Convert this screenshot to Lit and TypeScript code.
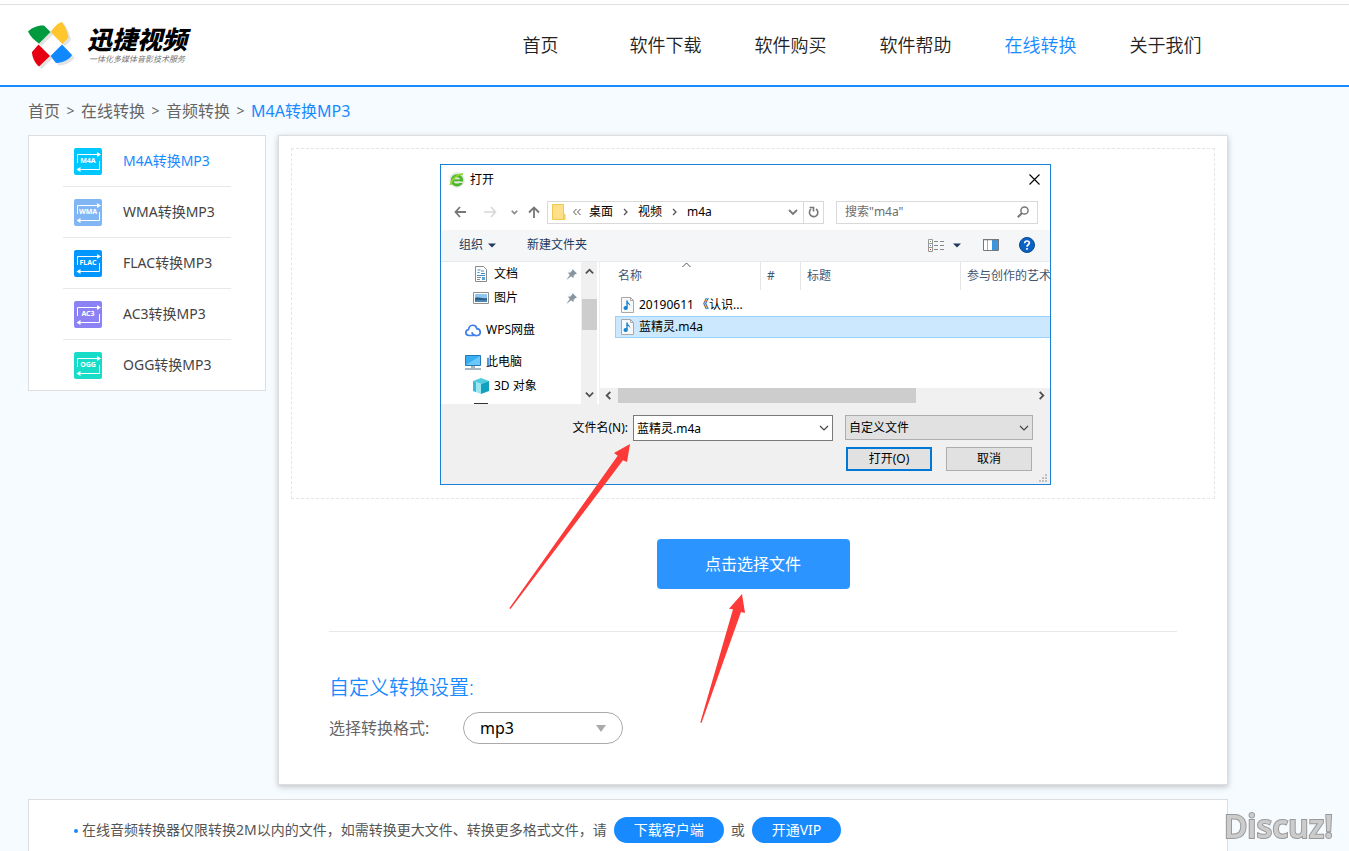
import { LitElement, html, svg, css } from "lit";
import { customElement, property, state } from "lit/decorators.js";
import { classMap } from "lit/directives/class-map.js";
import { styleMap } from "lit/directives/style-map.js";

const NAV = ["首页", "软件下载", "软件购买", "软件帮助", "在线转换", "关于我们"];

const FORMATS = [
  { tag: "M4A", color: "#00c8ff" },
  { tag: "WMA", color: "#80b6f4" },
  { tag: "FLAC", color: "#0096ff" },
  { tag: "AC3", color: "#8c82f3" },
  { tag: "OGG", color: "#17dcc8" },
];

const fontStack = css`"Noto Sans", "Noto Sans CJK SC", sans-serif`;

const chevron = (size = 10) => html`<svg width=${size} height=${size} viewBox="0 0 10 10" aria-hidden="true">
  <path d="M1 3l4 4 4-4" fill="none" stroke="currentColor" stroke-width="1.2" />
</svg>`;

const noteIcon = html`<svg class="note" width="13" height="16" viewBox="0 0 13 16" aria-hidden="true">
  <path d="M.5.5h9l3 3v12H.5z" fill="#f8f8f8" stroke="#a8a8a8" />
  <path d="M9.500.500v3h3" fill="none" stroke="#a8a8a8" />
  <path d="M6 3.500v7" stroke="#1583cf" stroke-width="1.400" />
  <path d="M6 3.500c.3 2 3.500 2.500 3.200 6-.5-2-1.800-2.600-3.200-2.800z" fill="#1583cf" />
  <ellipse cx="4.700" cy="11" rx="2.200" ry="1.900" fill="#1583cf" />
</svg>`;

const pinIcon = html`<svg width="11" height="11" viewBox="0 0 11 11" aria-hidden="true">
  <path d="M6.500 0L11 4.500l-1.500.4L7.600 6.800 7.500 9.200 5.300 7.200.3 10.900l3.500-5L1.800 3.700l2.500-.1 1.900-2z" fill="#8796a3" />
</svg>`;

/** A file picker window: address bar, folder tree, file list and name field. */
@customElement("file-dialog")
export class FileDialog extends LitElement {
  static styles = css`
    :host {
      display: block;
      box-sizing: border-box;
      border: 1px solid #1a80d6;
      background: #fff;
      color: #000;
      font: 12px/16px ${fontStack};
    }
    * { box-sizing: border-box; }
    button, input, select { font: inherit; color: inherit; margin: 0; padding: 0; border: 0; background: none; border-radius: 0; outline: 0; }
    svg { display: block; flex: none; }
    .title { display: flex; align-items: center; gap: 5px; height: 29px; padding: 0 10px 0 8px; }
    .close { margin-left: auto; }
    .path { display: flex; align-items: center; height: 36px; padding: 0 12px 0 13px; color: #666; }
    .arrows { display: flex; align-items: center; gap: 14px; width: 93px; }
    .arrows button:nth-child(1) { margin-right: 3px; }
    .arrows button:nth-child(4) { margin-left: -4px; }
    .address { display: flex; align-items: center; flex: 1; height: 23px; border: 1px solid #d9d9d9; padding-left: 4px; }
    .crumbs { display: flex; align-items: center; gap: 8px; flex: 1; color: #000; margin-left: 7px; }
    .crumbs svg { color: #555; }
    .drop { display: flex; justify-content: center; width: 20px; }
    .reload { display: flex; align-items: center; justify-content: center; align-self: stretch; width: 20px; border-left: 1px solid #d9d9d9; }
    .search { display: flex; align-items: center; width: 202px; height: 23px; margin-left: 12px; padding: 0 8px; border: 1px solid #d9d9d9; }
    .search input { flex: 1; min-width: 0; }
    .search input::placeholder { color: #6d6d6d; opacity: 1; }
    .tools { display: flex; align-items: center; height: 32px; padding: 0 15px 1px 18px; background: #f5f6f7; border-bottom: 1px solid #e8eaec; color: #1e395b; }
    .tools button { display: flex; align-items: center; gap: 5px; }
    .tools .new { margin: 0 auto 0 31px; }
    .tools .view { gap: 8px; margin-right: 22px; }
    .tools .pane { margin-right: 20px; }
    .body { display: flex; height: 142px; }
    .tree { width: 140px; overflow: hidden; }
    .tree ul { list-style: none; margin: 0 0 8px; padding: 0; }
    .tree li { display: flex; align-items: center; gap: 5px; height: 24px; padding: 0 4px 0 24px; }
    .tree li.sub { padding-left: 32px; }
    .tree li svg:last-child:not(:first-child) { margin-left: auto; }
    .vbar { display: flex; flex-direction: column; align-items: center; width: 16px; margin-right: 2px; padding: 5px 0; background: #f0f0f0; color: #505050; }
    .vbar i { width: 15px; height: 31px; margin: 23px 0 auto; background: #cdcdcd; }
    .files { display: flex; flex-direction: column; flex: 1; min-width: 0; border-left: 1px solid #f0f0f0; }
    .scroll { position: relative; flex: 1; overflow: hidden; padding-left: 15px; }
    .sort { position: absolute; left: 82px; top: -3px; color: #555; }
    table { border-collapse: collapse; table-layout: fixed; width: 100%; }
    .c1 { width: 146px; } .c2 { width: 40px; } .c3 { width: 160px; }
    th { padding: 0 0 4px; font-weight: 400; text-align: left; color: #43566f; white-space: nowrap; }
    th span { display: block; height: 28px; padding-left: 6px; line-height: 28px; border-right: 1px solid #e5e5e5; }
    th:first-child span { padding-left: 3px; }
    th:last-child span { border-right: 0; }
    td { height: 22px; padding: 0; white-space: nowrap; }
    td .name { display: flex; align-items: center; gap: 5px; height: 22px; padding-left: 6px; overflow: hidden; }
    .picked { background: #cce8ff; }
    .picked td { box-shadow: inset 0 1px #99d1ff, inset 0 -1px #99d1ff; }
    .picked td:first-child { box-shadow: inset 0 1px #99d1ff, inset 0 -1px #99d1ff, inset 1px 0 #99d1ff; }
    .hbar { display: flex; align-items: center; height: 16px; padding: 0 4px 1px; background: #f0f0f0; color: #505050; }
    .hbar i { width: 298px; height: 15px; margin: 0 auto 0 5px; background: #cdcdcd; }
    .foot { display: grid; grid-template-columns: 1fr 200px 188px; gap: 6px 12px; padding: 11px 17px 13px; background: #f0f0f0; position: relative; align-items: start; }
    .foot label { text-align: right; line-height: 26px; margin-right: -7px; }
    .field, .kind { display: flex; align-items: center; position: relative; }
    .field input { width: 100%; height: 26px; padding: 0 22px 0 3px; border: 1px solid #7a7a7a; background: #fff; }
    .kind select { width: 100%; height: 25px; padding: 0 3px; appearance: none; border: 1px solid #adadad; background: #e1e1e1; }
    .field svg, .kind svg { position: absolute; right: 4px; color: #444; pointer-events: none; }
    .actions { grid-column: 3; display: flex; justify-content: space-between; padding: 0 1px; }
    .actions button { width: 86px; height: 24px; border: 1px solid #adadad; background: #e1e1e1; }
    .actions .ok { border: 2px solid #0078d7; }
    .grip { position: absolute; right: 3px; bottom: 2px; }
  `;

  render() {
    return html`
      <div class="title">
        <svg width="16" height="16" viewBox="0 0 16 16" aria-hidden="true">
          <circle cx="8" cy="8" r="7.700" fill="#e4e8e2" />
          <circle cx="8" cy="8.400" r="4.700" fill="none" stroke="#4fb52a" stroke-width="3" />
          <path d="M4 8.300h8" stroke="#4fb52a" stroke-width="2" />
          <path d="M9.500 9.500h6v1.500h-6z" fill="#e4e8e2" />
          <path d="M1.500 13C2 7.500 8.500 1.500 14 2.200" stroke="#8bd830" stroke-width="1.700" fill="none" />
        </svg>
        <span>打开</span>
        <button class="close" aria-label="关闭">
          <svg width="11" height="11" viewBox="0 0 11 11"><path d="M.5.5l10 10M10.500.5l-10 10" stroke="#000" stroke-width="1.100" /></svg>
        </button>
      </div>
      <div class="path">
        <div class="arrows">
          <button aria-label="后退"><svg width="13" height="12" viewBox="0 0 13 12"><path d="M6 1L1.500 6 6 11M1.500 6H12" fill="none" stroke="#777" stroke-width="1.800" /></svg></button>
          <button aria-label="前进"><svg width="13" height="12" viewBox="0 0 13 12"><path d="M7 1l4.500 5L7 11M11.500 6H0" fill="none" stroke="#d8d8d8" stroke-width="1.600" /></svg></button>
          <button aria-label="最近位置"><svg width="7" height="5" viewBox="0 0 7 5"><path d="M.7.7l2.800 2.800L6.300.7" fill="none" stroke="#888" stroke-width="1.600" /></svg></button>
          <button aria-label="上移"><svg width="12" height="12" viewBox="0 0 12 12"><path d="M1 6.500L6 1.500l5 5M6 1.500V12" fill="none" stroke="#777" stroke-width="1.800" /></svg></button>
        </div>
        <div class="address">
          <svg width="14" height="16" viewBox="0 0 14 16" aria-hidden="true"><path d="M.5.500h11v10H13v5H.5z" fill="#ffe08a" stroke="#f0c751" /><path d="M11.500 10.500v5" stroke="#f0c751" /></svg>
          <div class="crumbs">
            <svg width="8" height="8" viewBox="0 0 8 8"><path d="M3.500 1l-3 3 3 3M7.500 1l-3 3 3 3" fill="none" stroke="currentColor" /></svg>
            <button>桌面</button>${this.step()}<button>视频</button>${this.step()}<button>m4a</button>
          </div>
          <button class="drop" aria-label="历史"><svg width="10" height="7" viewBox="0 0 10 7"><path d="M1 1l4 4 4-4" fill="none" stroke="#777" stroke-width="1.800" /></svg></button>
          <button class="reload" aria-label="刷新">
            <svg width="11" height="12" viewBox="0 0 11 12"><path d="M3 3.200A4.200 4.200 0 1 0 8 3M1.500 1.500h4v4" fill="none" stroke="#777" stroke-width="1.600" /></svg>
          </button>
        </div>
        <div class="search">
          <input type="text" aria-label="搜索" placeholder='搜索"m4a"' />
          <svg width="12" height="12" viewBox="0 0 12 12" aria-hidden="true"><circle cx="7.500" cy="4.500" r="3.600" fill="none" stroke="#777" stroke-width="1.500" /><path d="M5 7L.8 11.200" stroke="#777" stroke-width="2" /></svg>
        </div>
      </div>
      <div class="tools">
        <button>组织 <svg width="8" height="5" viewBox="0 0 8 5"><path d="M0 .5h8l-4 4z" fill="#1e395b" /></svg></button>
        <button class="new">新建文件夹</button>
        <button class="view" aria-label="视图">
          <svg width="17" height="13" viewBox="0 0 17 13">
            <path d="M.5.500h4v12h-4zM.5 4.500h4M.5 8.500h4" fill="#fff" stroke="#999" />
            <path d="M6 2.500h4M12 2.500h4M6 6.500h4M12 6.500h4M6 10.500h4M12 10.500h4" stroke="#888" />
            <path d="M2 2h1v1H2z" fill="#5b9b5b" /><path d="M2 6h1v1H2z" fill="#2b7fd6" /><path d="M2 10h1v1H2z" fill="#e02020" />
          </svg>
          <svg width="8" height="5" viewBox="0 0 8 5"><path d="M0 .5h8l-4 4z" fill="#1e395b" /></svg>
        </button>
        <button class="pane" aria-label="预览窗格">
          <svg width="16" height="12" viewBox="0 0 16 12"><path d="M.5.5h15v11H.5z" fill="#fff" stroke="#777" /><path d="M4.500 1v10" stroke="#aaa" /><path d="M9 1h6v10H9z" fill="#3c95dd" /><path d="M0 .500h16" stroke="#777" stroke-width="1.500" /></svg>
        </button>
        <button aria-label="帮助">
          <svg width="16" height="16" viewBox="0 0 16 16"><circle cx="8" cy="8" r="7.500" fill="#0b62c4" stroke="#07478f" /><path d="M5.700 6.200c0-3 4.600-2.800 4.600-.2C10.300 7.700 8 7.800 8 9.700M8 11v1.700" fill="none" stroke="#fff" stroke-width="1.700" /></svg>
        </button>
      </div>
      <div class="body">
        <div class="tree">
          <ul>
            <li class="sub">
              <svg width="16" height="16" viewBox="0 0 16 16"><path d="M2.500.5h8l3 3v12h-11z" fill="#fff" stroke="#8a8a8a" /><path d="M4.500 4h3M4.500 6.500h2M4 9.500h8M8 7.500h4M8 5h3" stroke="#3a8dc8" /><path d="M4 11.500h4M4 13.500h3" stroke="#888" /><path d="M9 11h3v3H9z" fill="#5ba4d8" /></svg>
              文档${pinIcon}
            </li>
            <li class="sub">
              <svg width="16" height="12" viewBox="0 0 16 12"><path d="M.5.5h15v11H.5z" fill="#fff" stroke="#8f8f8f" /><path d="M2 2h12v8H2z" fill="#8ec8f2" /><path d="M2 6c3-2 6 1 12 0v4H2z" fill="#2d5f86" /><path d="M2 8.500c5-1 8 0 12-.5v2H2z" fill="#4b86b5" /></svg>
              图片${pinIcon}
            </li>
          </ul>
          <ul>
            <li>
              <svg width="16" height="13" viewBox="0 0 16 13"><path d="M9 11.500H4C-.5 11 .3 6 3.500 5.600 4.200 0 11 0 11.800 4.600c4.500.4 4.500 6.500.6 6.900C9.500 12 7.200 10 6.800 8.200" fill="none" stroke="#3f7fe8" stroke-width="1.700" /></svg>
              WPS网盘
            </li>
          </ul>
          <ul>
            <li>
              <svg width="16" height="15" viewBox="0 0 16 15"><path d="M.5.5h15v10H.5z" fill="#38aef2" stroke="#2579b5" /><path d="M1 10L15 1v9z" fill="#6cc8fb" /><path d="M6 12h4M0 14h16" stroke="#8ba0ae" stroke-width="1.500" /></svg>
              此电脑
            </li>
            <li class="sub">
              <svg width="16" height="16" viewBox="0 0 16 16"><path d="M0 3l8-3 8 3-8 3z" fill="#4fcbe0" /><path d="M0 3l8 3v10l-8-3z" fill="#9be6f1" /><path d="M16 3L8 6v10l8-3z" fill="#12a0bf" /><path d="M0 3l3 1v10l-3-1z" fill="#35bcd6" /></svg>
              3D 对象
            </li>
            <li class="sub">
              <svg width="16" height="14" viewBox="0 0 16 14"><path d="M1 0h14v14H1z" fill="#333" /></svg>
            </li>
          </ul>
        </div>
        <div class="vbar">
          <svg width="9" height="9" viewBox="0 0 10 10"><path d="M1 7l4-4 4 4" fill="none" stroke="currentColor" stroke-width="2" /></svg>
          <i></i>
          <svg width="9" height="9" viewBox="0 0 10 10"><path d="M1 3l4 4 4-4" fill="none" stroke="currentColor" stroke-width="2" /></svg>
        </div>
        <div class="files">
          <div class="scroll">
            <svg class="sort" width="9" height="9" viewBox="0 0 9 9"><path d="M.5 8L4.500 4l4 4" fill="none" stroke="currentColor" /></svg>
            <table>
              <colgroup><col class="c1" /><col class="c2" /><col class="c3" /><col /></colgroup>
              <thead><tr><th><span>名称</span></th><th><span>#</span></th><th><span>标题</span></th><th><span>参与创作的艺术</span></th></tr></thead>
              <tbody>
                <tr><td><div class="name">${noteIcon}20190611 《认识...</div></td><td></td><td></td><td></td></tr>
                <tr class="picked"><td><div class="name">${noteIcon}蓝精灵.m4a</div></td><td></td><td></td><td></td></tr>
              </tbody>
            </table>
          </div>
          <div class="hbar">
            <svg width="9" height="9" viewBox="0 0 10 10"><path d="M7 1L3 5l4 4" fill="none" stroke="currentColor" stroke-width="2" /></svg>
            <i></i>
            <svg width="9" height="9" viewBox="0 0 10 10"><path d="M3 1l4 4-4 4" fill="none" stroke="currentColor" stroke-width="2" /></svg>
          </div>
        </div>
      </div>
      <div class="foot">
        <label for="fname">文件名(N):</label>
        <div class="field"><input id="fname" type="text" value="蓝精灵.m4a" />${chevron()}</div>
        <div class="kind"><select aria-label="文件类型"><option>自定义文件</option></select>${chevron()}</div>
        <div class="actions"><button class="ok">打开(O)</button><button>取消</button></div>
        <svg class="grip" width="8" height="8" viewBox="0 0 8 8" aria-hidden="true"><path d="M6 0h2v2H6zM3 3h2v2H3zM6 3h2v2H6zM0 6h2v2H0zM3 6h2v2H3zM6 6h2v2H6z" fill="#bfbfbf" /></svg>
      </div>
    `;
  }

  private step() {
    return html`<svg width="9" height="8" viewBox="0 0 9 8" aria-hidden="true"><path d="M3 1l3 3-3 3" fill="none" stroke="currentColor" stroke-width="1.300" /></svg>`;
  }
}

/** Side list of the conversions on offer. */
@customElement("format-menu")
export class FormatMenu extends LitElement {
  @property() active = "M4A";

  static styles = css`
    :host { display: block; box-sizing: border-box; border: 1px solid #ddd; background: #fff; font: 14px/20px ${fontStack}; }
    ul { list-style: none; margin: 0 34px; padding: 0; }
    li + li { border-top: 1px solid #e8e8e8; }
    a { display: flex; align-items: center; gap: 21px; height: 50px; padding-left: 11px; color: #444; text-decoration: none; white-space: nowrap; }
    a.on { color: #188aff; }
    .tile { display: grid; width: 28px; height: 27px; border-radius: 2px; color: #fff; }
    .tile > * { grid-area: 1 / 1; place-self: center; }
    .tile span { font-size: 7px; line-height: 8px; font-weight: 700; }
  `;

  render() {
    return html`<ul>
      ${FORMATS.map(
        (f) => html`<li>
          <a href="#" class=${classMap({ on: f.tag === this.active })}>
            <span class="tile" style=${styleMap({ background: f.color })} aria-hidden="true">
              <svg width="28" height="27" viewBox="0 0 28 27">
                <path d="M3.500 15V6.500H23M25.500 13v8.500H6" fill="none" stroke="#fff" />
                <path d="M23 4l4 2.500L23 9zM6.500 19l-4 2.500 4 2.500z" fill="#fff" />
              </svg>
              <span>${f.tag}</span>
            </span>
            <span>${f.tag}转换MP3</span>
          </a>
        </li>`
      )}
    </ul>`;
  }
}

@customElement("app-root")
export class AppRoot extends LitElement {
  @state() private page = "在线转换";

  static styles = css`
    :host { display: flex; flex-direction: column; min-height: 100vh; background: #f6fbff; color: #666; font: 16px/24px ${fontStack}; }
    * { box-sizing: border-box; }
    a { color: inherit; text-decoration: none; }
    .wrap { width: 100%; max-width: 1256px; padding: 0 28px; }
    header { padding-top: 4px; background: #fff; border-bottom: 2px solid #188aff; }
    .bar { border-top: 1px solid #e0e0e0; }
    .bar .wrap { display: flex; align-items: center; justify-content: space-between; height: 80px; }
    .logo { display: flex; align-items: center; gap: 11px; }
    .logo svg { display: block; }
    .brand { display: flex; flex-direction: column; gap: 2px; margin-top: -2px; }
    .brand b { color: #000; font-size: 25px; line-height: 28px; font-weight: 900; font-style: italic; }
    .brand small { padding-left: 2px; font-size: 8px; line-height: 8px; font-weight: 400; font-style: italic; color: #777; }
    nav { display: grid; grid-template-columns: repeat(6, 125px); text-align: center; font-size: 18px; font-weight: 350; color: #222; }
    .on { color: #188aff; }
    .crumbs { display: flex; gap: 6px; padding-top: 12px; padding-bottom: 12px; }
    .crumbs i { font-style: normal; font-size: 14px; width: 9px; text-align: center; }
    .cols { display: flex; align-items: flex-start; gap: 12px; }
    format-menu { width: 238px; flex: none; }
    .panel { position: relative; flex: 1; min-width: 0; padding: 12px 12px 40px; background: #fff; border: 1px solid #ddd; box-shadow: 0 2px 6px rgba(0, 0, 0, 0.22); }
    .zone { padding: 15px 0 13px 148px; border: 1px dashed #e5e5e5; }
    file-dialog { width: 611px; max-width: 100%; }
    .choose { display: block; width: 193px; height: 50px; margin: 40px auto 42px; border: 0; border-radius: 4px; background: #2b94ff; color: #fff; font: inherit; }
    .settings { margin: 0 38px; padding-top: 41px; border-top: 1px solid #e8e8e8; }
    h2 { margin: 0 0 9px; font-size: 20px; line-height: 30px; font-weight: 350; color: #188aff; }
    .row { display: flex; align-items: center; }
    .row label { width: 134px; }
    .pick { position: relative; display: flex; align-items: center; width: 160px; }
    .pick select { width: 100%; height: 32px; padding: 0 16px; appearance: none; border: 1px solid #aaa; border-radius: 16px; background: #fff; font: inherit; color: #000; }
    .pick svg { position: absolute; right: 17px; pointer-events: none; }
    .marks { position: absolute; left: -1px; top: -1px; pointer-events: none; }
    footer { display: flex; flex: 1; margin-top: 14px; }
    .tips { flex: 1; margin: 0; padding: 17px 44px 0; list-style: none; background: #fff; border: 1px solid #ddd; border-bottom: 0; font-size: 14px; color: #555; }
    .tips li { display: flex; align-items: center; height: 26px; white-space: nowrap; }
    .tips li::before { content: ""; width: 4px; height: 4px; margin: 2px 4px 0 1px; border-radius: 50%; background: #188aff; }
    .pill { height: 26px; padding: 0 20px; margin: 0 7px; border-radius: 13px; background: #188aff; color: #fff; line-height: 26px; }
    .mark { position: fixed; right: 16px; bottom: 5px; font: 600 32px/40px "Noto Sans", sans-serif; color: #ccc; -webkit-text-stroke: 2px #999; paint-order: stroke; pointer-events: none; }
  `;

  render() {
    return html`
      <header>
        <div class="bar"><div class="wrap">
          <a class="logo" href="#" aria-label="迅捷视频">
            <svg width="48" height="48" viewBox="0 -1 48 48" aria-hidden="true">
              <g fill="#e3e3e3" transform="translate(2.500 2.500)">${this.petals()}</g>
              <g>${this.petals(["#009a3e", "#ffc62e", "#e60012", "#1089ff"])}</g>
            </svg>
            <span class="brand"><b>迅捷视频</b><small>一体化多媒体音影技术服务</small></span>
          </a>
          <nav>${NAV.map((n) => html`<a href="#" class=${classMap({ on: n === this.page })} @click=${() => (this.page = n)}>${n}</a>`)}</nav>
        </div></div>
      </header>
      <div class="wrap crumbs">
        <a href="#">首页</a><i>&gt;</i><a href="#">在线转换</a><i>&gt;</i><a href="#">音频转换</a><i>&gt;</i><a href="#" class="on">M4A转换MP3</a>
      </div>
      <main class="wrap cols">
        <format-menu active="M4A"></format-menu>
        <section class="panel">
          <div class="zone"><file-dialog></file-dialog></div>
          <button class="choose">点击选择文件</button>
          <div class="settings">
            <h2>自定义转换设置:</h2>
            <div class="row">
              <label for="fmt">选择转换格式:</label>
              <div class="pick">
                <select id="fmt"><option>mp3</option></select>
                <svg width="10" height="7" viewBox="0 0 10 7" aria-hidden="true"><path d="M0 0h10L5 7z" fill="#aaa" /></svg>
              </div>
            </div>
          </div>
          <svg class="marks" width="950" height="650" viewBox="278 135 950 650" fill="#fc3a38" aria-hidden="true">
            <path d="M509.300 608.200L617.700 455.700 614 453 630 444 627 462 623 460.300 510.500 609z" />
            <path d="M700.300 722.500L733 609.300 729 608.700 742 594 745 613 741 612 701.500 723z" />
          </svg>
        </section>
      </main>
      <footer class="wrap">
        <ul class="tips">
          <li>在线音频转换器仅限转换2M以内的文件，如需转换更大文件、转换更多格式文件，请<a class="pill" href="#">下载客户端</a>或<a class="pill" href="#">开通VIP</a></li>
        </ul>
      </footer>
      <span class="mark">Discuz!</span>
    `;
  }

  private petals(colors: string[] = []) {
    const shapes = [
      "M0 9.500C4 5.500 10 3 16 3.500l6.500 6.500L11 21.500C6 18 2 14 0 9.500z",
      "M22.500 10C26 5 30 1 34 0c2.500 3 5.500 10 6.500 15.500L34.500 22z",
      "M10.500 22.500L22 34 11 44.500C8 42.500 4 36 4 30z",
      "M34 22.500l10 10.500c-2 4-9 8-16 8L22.500 34z",
    ];
    return shapes.map((d, i) => (colors[i] ? svg`<path d=${d} fill=${colors[i]} />` : svg`<path d=${d} />`));
  }
}
